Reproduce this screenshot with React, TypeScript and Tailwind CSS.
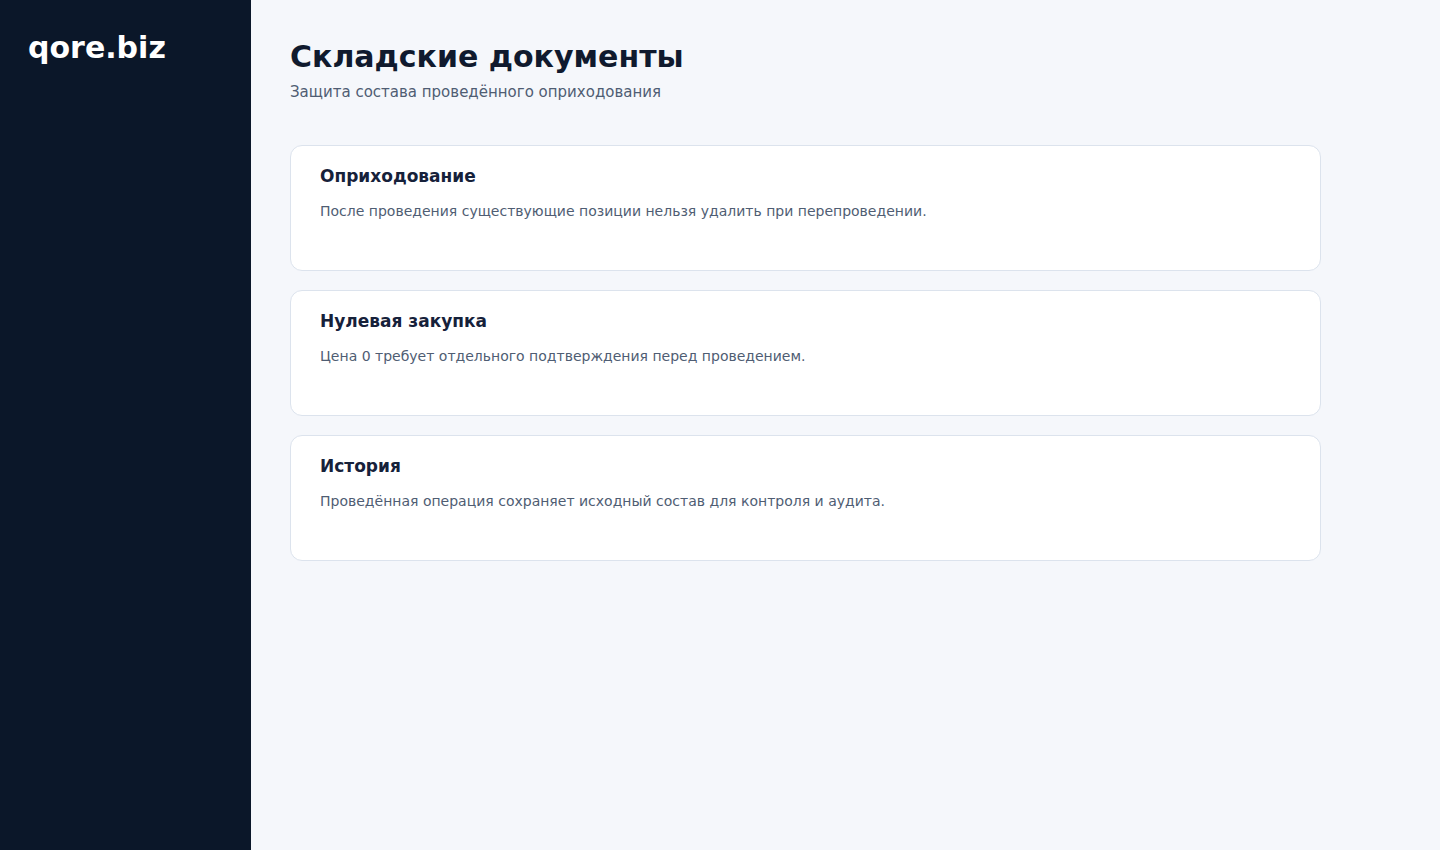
const notes = [
  {
    title: "Оприходование",
    text: "После проведения существующие позиции нельзя удалить при перепроведении.",
  },
  {
    title: "Нулевая закупка",
    text: "Цена 0 требует отдельного подтверждения перед проведением.",
  },
  {
    title: "История",
    text: "Проведённая операция сохраняет исходный состав для контроля и аудита.",
  },
];

function Sidebar() {
  return (
    <aside className="w-[251px] shrink-0 bg-[#0b1729] px-7 pt-7">
      <div className="text-[30px] leading-[40px] font-bold text-white">qore.biz</div>
    </aside>
  );
}

function NoteCard({ title, text }: { title: string; text: string }) {
  return (
    <div className="h-[126px] rounded-xl border border-[#dce3ed] bg-white px-[29px] pt-[18px]">
      <h2 className="text-[17px] leading-6 font-bold text-[#16213a]">{title}</h2>
      <p className="mt-[13px] text-sm leading-5 text-[#4f5d73]">{text}</p>
    </div>
  );
}

export default function App() {
  return (
    <div
      className="flex min-h-[850px] bg-[#f5f7fb]"
      style={{ fontFamily: '"DejaVu Sans", sans-serif' }}
    >
      <Sidebar />
      <main className="flex-1 px-[39px] pt-[39px]">
        <div className="max-w-[1031px]">
          <h1 className="text-[30px] leading-9 font-bold text-[#101a2e]">Складские документы</h1>
          <p className="mt-[6px] text-[15px] leading-[22px] text-[#4f5d73]">
            Защита состава проведённого оприходования
          </p>
          <div className="mt-[42px] flex flex-col gap-[19px]">
            {notes.map((n) => (
              <NoteCard key={n.title} title={n.title} text={n.text} />
            ))}
          </div>
        </div>
      </main>
    </div>
  );
}
